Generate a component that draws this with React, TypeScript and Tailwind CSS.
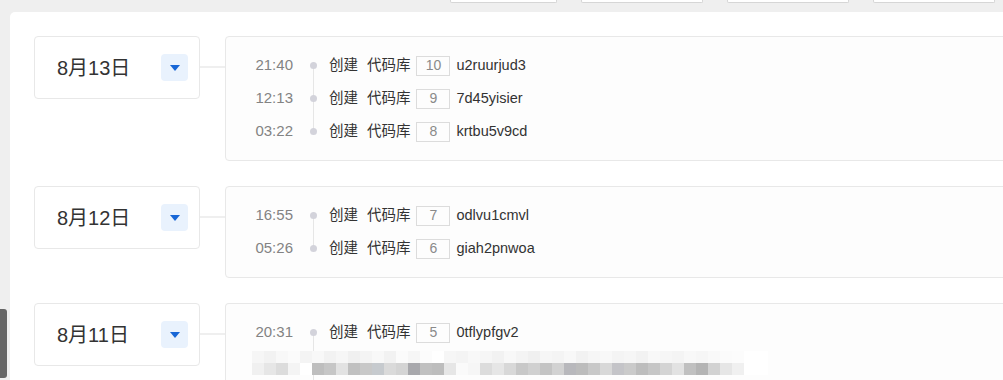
import React from "react";

type Row = { time: string; num: string; name: string };
type Group = { date: string; rows: Row[]; tail?: boolean; mt: string };

const groups: Group[] = [
  {
    date: "8月13日",
    mt: "mt-0",
    rows: [
      { time: "21:40", num: "10", name: "u2ruurjud3" },
      { time: "12:13", num: "9", name: "7d45yisier" },
      { time: "03:22", num: "8", name: "krtbu5v9cd" },
    ],
  },
  {
    date: "8月12日",
    mt: "mt-[25px]",
    rows: [
      { time: "16:55", num: "7", name: "odlvu1cmvl" },
      { time: "05:26", num: "6", name: "giah2pnwoa" },
    ],
  },
  {
    date: "8月11日",
    mt: "mt-[25px]",
    tail: true,
    rows: [{ time: "20:31", num: "5", name: "0tflypfgv2" }],
  },
];

const topRow = [
  "#f6f6f6", "#f2f2f2", "#f8f8f8", "#fbfbfb", "#f4f4f4", "#f8f8f8", "#f2f2f2", "#f6f6f6", "#f0f0f0", "#f4f4f4",
  "#f8f8f8", "#f2f2f2", "#fbfbfb", "#f6f6f6", "#fcfcfc", "#ffffff", "#f6f6f6", "#f4f4f4", "#f8f8f8", "#f6f6f6",
  "#f2f2f2", "#f8f8f8", "#f4f4f4", "#f0f0f0", "#f6f6f6", "#f4f4f4", "#f8f8f8", "#f2f2f2", "#f6f6f6", "#f8f8f8",
  "#f4f4f4", "#f6f6f6", "#f2f2f2", "#f8f8f8", "#f6f6f6", "#f4f4f4", "#f8f8f8", "#f6f6f6", "#f9f9f9", "#fbfbfb",
  "#fcfcfc", "#ffffff", "#ffffff",
];
const botRow = [
  "#f0f0f0", "#e6e6e6", "#dcdcdc", "#f4f4f4", "#ffffff", "#bebebe", "#c6c6c6", "#e2e2e2", "#c0c0c0", "#c8c8c8",
  "#c6cace", "#dadada", "#d4d4d4", "#a8a8ac", "#c0c0c0", "#bdbdbd", "#e6e6e6", "#fafafa", "#f6f6f6", "#dcdcdc",
  "#e6e6e6", "#d8d8d8", "#c8c8c8", "#d0d0d0", "#c4c4c4", "#d2d2d2", "#b8b8bc", "#bcbcbc", "#c8c8c8", "#d8d8d8",
  "#c4c4c8", "#cacaca", "#bdbdbd", "#c6c6c6", "#d4d4d4", "#e2e2e2", "#c0c0c0", "#b4b4b4", "#d2d2d2", "#e6e6e6",
  "#f0f0f0", "#ffffff", "#ffffff",
];

function Caret() {
  return (
    <svg width="10" height="6" viewBox="0 0 10 6">
      <path d="M0 0 L10 0 L5 6 Z" fill="#1766d6" />
    </svg>
  );
}

function Mosaic() {
  return (
    <svg width="520" height="24" viewBox="0 0 520 24">
      {topRow.map((c, i) => (
        <rect key={"t" + i} x={i * 12} y={0} width={12} height={12} fill={c} />
      ))}
      {botRow.map((c, i) => (
        <rect key={"b" + i} x={i * 12} y={12} width={12} height={12} fill={c} />
      ))}
    </svg>
  );
}

function TimelineRow({ row, first, last, tail }: { row: Row; first: boolean; last: boolean; tail?: boolean }) {
  return (
    <div className="flex h-[33px] items-center">
      <div className="w-[38px] text-right text-[15px] text-[#838383]">{row.time}</div>
      <div className="relative ml-[17px] flex h-full w-[7px] items-center justify-center">
        {!first && <div className="absolute left-[3px] top-0 h-1/2 w-px bg-[#e6e6e6]" />}
        {(!last || tail) && <div className="absolute bottom-0 left-[3px] h-1/2 w-px bg-[#e6e6e6]" />}
        <div className="relative h-[7px] w-[7px] rounded-full bg-[#d3d3db]" />
      </div>
      <div className="ml-[12px] text-[14.5px] text-[#333]">创建</div>
      <div className="ml-[9px] text-[14.5px] text-[#333]">代码库</div>
      <div className="ml-[6px] flex h-[20px] w-[34px] items-center justify-center border border-[#dcdcdc] text-[14px] text-[#8a8a8a]">
        {row.num}
      </div>
      <div className="ml-[6px] text-[14.5px] text-[#333]">{row.name}</div>
    </div>
  );
}

export default function App() {
  return (
    <div
      className="relative h-[380px] w-[1003px] overflow-hidden bg-[#efefef]"
      style={{ fontFamily: '"Liberation Sans", "Noto Sans CJK SC", Arial, sans-serif' }}
    >
      <div className="flex h-[12px] items-start gap-[24px] pl-[450px]">
        <div className="h-[3px] w-[107px] rounded-b-[2px] border border-t-0 border-[#d6d6d6] bg-white" />
        <div className="h-[3px] w-[122px] rounded-b-[2px] border border-t-0 border-[#d6d6d6] bg-white" />
        <div className="h-[3px] w-[122px] rounded-b-[2px] border border-t-0 border-[#d6d6d6] bg-white" />
        <div className="h-[3px] w-[122px] rounded-b-[2px] border border-t-0 border-[#d6d6d6] bg-white" />
      </div>

      <div className="ml-[10px] h-[400px] w-[1010px] rounded-tl-[5px] bg-white pl-[24px] pt-[24px]">
        {groups.map((g) => (
          <div key={g.date} className={"flex items-start " + g.mt}>
            <div className="flex h-[63px] w-[167px] items-center justify-between rounded-[4px] border border-[#e8e8e8] pl-[22px] pr-[11px]">
              <span className="text-[20px] text-[#333]">{g.date}</span>
              <div className="flex h-[27px] w-[27px] items-center justify-center rounded-[4px] bg-[#e9f2fd]">
                <Caret />
              </div>
            </div>
            <div className="mt-[30px] h-[2px] w-[25px] bg-[#efefef]" />
            <div
              className={
                "w-[800px] rounded-[4px] border border-[#e8e8e8] bg-[#fdfdfd] pl-[29px] pt-[12px] " +
                (g.tail ? "pb-0 rounded-b-none border-b-0" : "pb-[12px]")
              }
            >
              {g.rows.map((r, i) => (
                <TimelineRow
                  key={r.time}
                  row={r}
                  first={i === 0}
                  last={i === g.rows.length - 1}
                  tail={g.tail}
                />
              ))}
              {g.tail && (
                <div className="relative -ml-[3px] mt-[2px] h-[40px]">
                  <div className="absolute left-[61px] top-[-2px] h-[40px] w-px bg-[#e6e6e6]" />
                  <div className="relative">
                    <Mosaic />
                  </div>
                </div>
              )}
            </div>
          </div>
        ))}
      </div>

      <div className="absolute left-0 top-[309px] h-[69px] w-[7px] rounded-r-[3px] bg-[#666]" />
    </div>
  );
}
